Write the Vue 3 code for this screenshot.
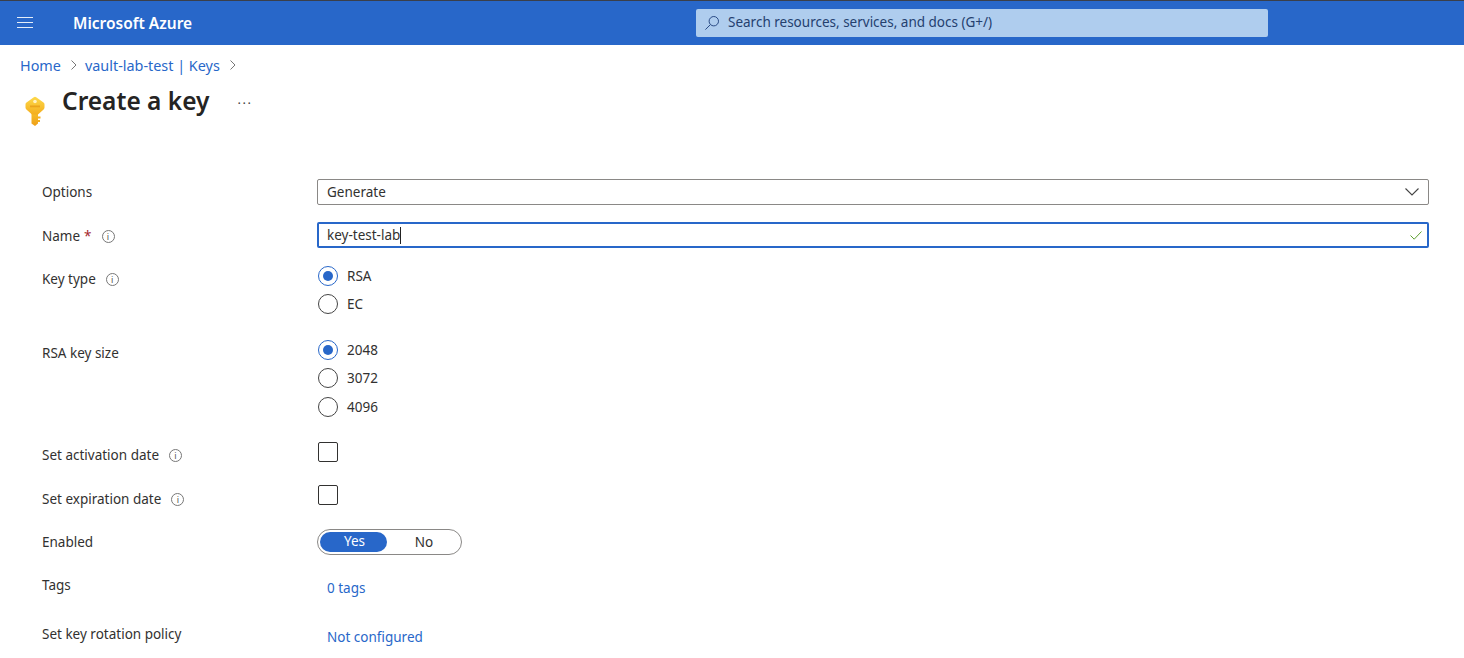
<script setup>
const keySizes = [
  { label: '2048', on: true },
  { label: '3072', on: false },
  { label: '4096', on: false },
]
</script>

<template>
  <div class="page">
    <header class="topbar">
      <div class="burger"><span></span><span></span><span></span></div>
      <div class="brand">Microsoft Azure</div>
      <div class="search">
        <svg width="16" height="16" viewBox="0 0 16 16" fill="none" stroke="#2b4c86" stroke-width="1">
          <circle cx="9.8" cy="6.2" r="4.7" />
          <path d="M6.4 9.6 1.4 14.6" />
        </svg>
        <span class="search-text">Search resources, services, and docs (G+/)</span>
      </div>
    </header>

    <nav class="crumbs">
      <a>Home</a>
      <svg class="chev" width="8" height="12" viewBox="0 0 8 12" fill="none" stroke="#777" stroke-width="1"><path d="M1.5 1.5 6 6l-4.500 4.500" /></svg>
      <a>vault-lab-test | Keys</a>
      <svg class="chev" width="8" height="12" viewBox="0 0 8 12" fill="none" stroke="#777" stroke-width="1"><path d="M1.5 1.5 6 6l-4.500 4.500" /></svg>
    </nav>

    <div class="heading">
      <svg class="key" width="22" height="32" viewBox="0 0 22 32">
        <defs>
          <linearGradient id="kg" x1="0" y1="0" x2="0" y2="1">
            <stop offset="0" stop-color="#fdd94a" />
            <stop offset="1" stop-color="#f4ae1e" />
          </linearGradient>
          <linearGradient id="ks" x1="0" y1="0" x2="0" y2="1">
            <stop offset="0" stop-color="#f8c22c" />
            <stop offset="1" stop-color="#ee9f18" />
          </linearGradient>
        </defs>
        <path d="M7.500 16H14v12.500L11 31l-3.500-2.500z" fill="url(#ks)" />
        <path d="M14 21.500h2.500v2H14zM14 25h2v2h-2z" fill="#f4b01f" />
        <path d="M9.800 2.200a2 2 0 0 1 2.400 0l7.300 5.300a2.400 2.400 0 0 1 1 2v3a2.400 2.400 0 0 1-.9 1.900L14 19.500H8L2.400 14.400a2.400 2.400 0 0 1-.9-1.900v-3a2.400 2.400 0 0 1 1-2z" fill="url(#kg)" />
        <circle cx="11" cy="6.500" r="1.800" fill="#fff3c4" />
        <rect x="6" y="10.500" width="10" height="1.800" fill="#eaa41c" />
      </svg>
      <h1>Create a key</h1>
      <span class="more">···</span>
    </div>

    <main class="form">
      <div class="row r-options">
        <label>Options</label>
        <div class="field">
          <span>Generate</span>
          <svg width="14" height="8" viewBox="0 0 14 8" fill="none" stroke="#444" stroke-width="1.100"><path d="M.5.500 7 7l6.500-6.500" /></svg>
        </div>
      </div>

      <div class="row r-name">
        <label>Name <em>*</em><i class="info">i</i></label>
        <div class="field focus">
          <span>key-test-lab<b class="caret"></b></span>
          <svg width="12" height="9" viewBox="0 0 12 9" fill="none" stroke="#5ea030" stroke-width="1"><path d="M.5 4.500 4.200 8.200 11.500.5" /></svg>
        </div>
      </div>

      <div class="row r-type">
        <label>Key type<i class="info">i</i></label>
        <div class="radios">
          <div class="radio"><span class="dot on"></span>RSA</div>
          <div class="radio"><span class="dot"></span>EC</div>
        </div>
      </div>

      <div class="row r-size">
        <label>RSA key size</label>
        <div class="radios three">
          <div v-for="k in keySizes" :key="k.label" class="radio">
            <span class="dot" :class="{ on: k.on }"></span>{{ k.label }}
          </div>
        </div>
      </div>

      <div class="row r-act">
        <label>Set activation date<i class="info">i</i></label>
        <span class="check"></span>
      </div>

      <div class="row r-exp">
        <label>Set expiration date<i class="info">i</i></label>
        <span class="check"></span>
      </div>

      <div class="row r-en">
        <label>Enabled</label>
        <div class="toggle"><span class="yes">Yes</span><span class="no">No</span></div>
      </div>

      <div class="row r-tags">
        <label>Tags</label>
        <a class="link">0 tags</a>
      </div>

      <div class="row r-rot">
        <label>Set key rotation policy</label>
        <a class="link">Not configured</a>
      </div>
    </main>
  </div>
</template>

<style>
html, body { margin: 0; background: #fff; overflow: hidden; }
</style>

<style scoped>
.page {
  height: 658px;
  overflow: hidden;
  font-family: "Noto Sans", "Open Sans", sans-serif;
  font-size: 13.5px;
  color: #323130;
}
.topbar {
  height: 44px;
  border-top: 1px solid #3a3f4a;
  background: #2867c9;
  display: flex;
  align-items: center;
  position: relative;
}
.burger {
  margin: -1px 0 0 17px;
  width: 16px;
  display: flex;
  flex-direction: column;
  gap: 4px;
}
.burger span { height: 1px; background: #e4edf9; }
.brand {
  margin-left: 40px;
  color: #fff;
  font-size: 15.500px;
  font-weight: 600;
  width: 623px;
}
.search {
  width: 572px;
  height: 28px;
  margin-top: -1px;
  border-radius: 2px;
  background: #afcdee;
  color: #24406f;
  display: flex;
  align-items: center;
  gap: 8px;
  padding-left: 8px;
  box-sizing: border-box;
}
.search-text { padding-bottom: 2px; }
.crumbs {
  height: 42px;
  margin-left: 20px;
  display: flex;
  align-items: center;
  font-size: 14.400px;
  color: #2867c9;
  box-sizing: border-box;
  padding-bottom: 2px;
}
.chev { margin: 0 7px 0 9px; }
.heading {
  height: 92px;
  margin-left: 24px;
  display: flex;
  align-items: flex-start;
}
.key { margin-top: 8px; }
h1 {
  margin: -2px 0 0 16px;
  font-size: 24.500px;
  line-height: 32px;
  font-weight: 600;
  color: #252423;
}
.more { margin: 7px 0 0 28px; font-size: 13px; color: #444; letter-spacing: 1.500px; }

.form { margin-left: 42px; width: 1387px; }
.row { display: grid; grid-template-columns: 275px 1fr; align-items: start; }
label { display: flex; align-items: center; line-height: 18px; white-space: nowrap; }
em { color: #a4262c; font-style: normal; margin-left: 4px; }
.info {
  width: 11px;
  height: 11px;
  margin-left: 10px;
  border: 1px solid #777;
  border-radius: 50%;
  font: 9px/11px "Noto Sans", sans-serif;
  text-align: center;
  color: #555;
}
.field {
  height: 26px;
  box-sizing: border-box;
  border: 1px solid #8a8886;
  border-radius: 2px;
  padding: 0 9px 0 9px;
  display: flex;
  align-items: center;
  justify-content: space-between;
}
.focus { border: 2px solid #2867c9; padding: 0 5px 0 8px; }
.caret {
  display: inline-block;
  width: 1px;
  height: 17px;
  background: #222;
  vertical-align: -4px;
}
.radios { display: flex; flex-direction: column; gap: 8px; margin-left: 1px; }
.three .radio:last-child { margin-top: 1px; }
.radio { display: flex; align-items: center; height: 20px; gap: 9px; }
.dot {
  width: 20px;
  height: 20px;
  box-sizing: border-box;
  border: 1px solid #444;
  border-radius: 50%;
  display: flex;
  align-items: center;
  justify-content: center;
}
.dot.on { border-color: #2867c9; }
.dot.on::after {
  content: "";
  width: 10px;
  height: 10px;
  border-radius: 50%;
  background: #2867c9;
}
.check {
  width: 20px;
  height: 20px;
  margin-left: 1px;
  box-sizing: border-box;
  border: 1px solid #323130;
  border-radius: 2px;
}
.toggle {
  width: 145px;
  height: 26px;
  box-sizing: border-box;
  border: 1px solid #8a8886;
  border-radius: 13px;
  padding: 2px;
  display: flex;
  align-items: center;
}
.yes {
  width: 68px;
  height: 20px;
  padding-left: 2px;
  box-sizing: border-box;
  border-radius: 10px;
  background: #2867c9;
  color: #fff;
  text-align: center;
  line-height: 19px;
}
.no { width: 73px; padding-left: 2px; box-sizing: border-box; text-align: center; }
.link { color: #2867c9; margin-left: 10px; line-height: 18px; }

.r-options label { margin-top: 4px; }
.r-name { margin-top: 17px; }
.r-name label { margin-top: 5px; }
.r-type { margin-top: 18px; }
.r-type label { margin-top: 4px; }
.r-size { margin-top: 26px; }
.r-size label { margin-top: 4px; }
.r-act { margin-top: 25px; }
.r-act label { margin-top: 4px; }
.r-exp { margin-top: 21px; }
.r-exp label { margin-top: 5px; }
.r-en { margin-top: 21px; }
.r-en label { margin-top: 4px; }
.r-tags { margin-top: 21px; }
.r-tags .link { margin-top: 3px; }
.r-rot { margin-top: 28px; }
.r-rot .link { margin-top: 3px; }
</style>
